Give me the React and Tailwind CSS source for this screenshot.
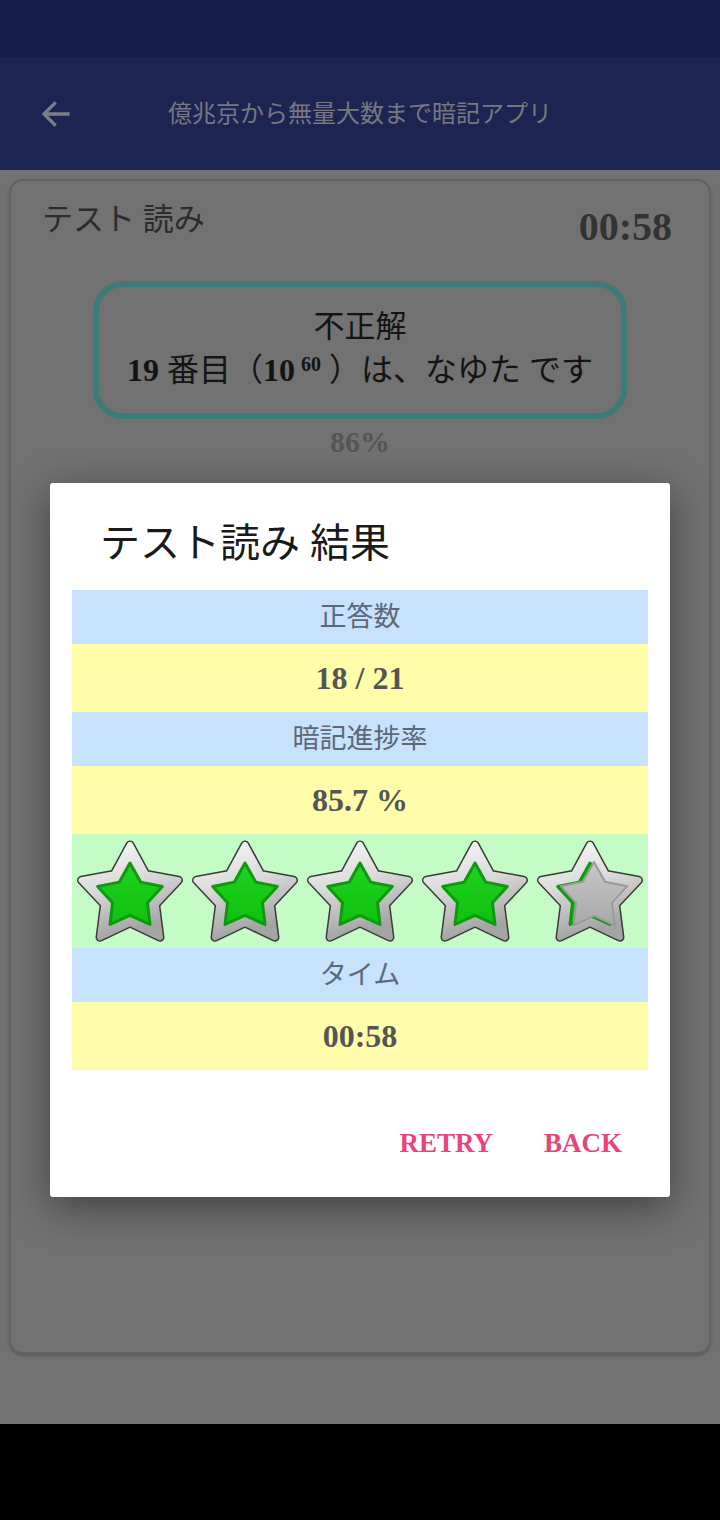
import { useId } from 'react'

const SERIF = { fontFamily: "'Liberation Serif', 'Noto Sans CJK JP', serif" }

const ROWS = [
  { label: '正答数', value: '18 / 21' },
  { label: '暗記進捗率', value: '85.7 %' },
]

function starPoints(cx, cy, r, ratio) {
  const pts = []
  for (let i = 0; i < 10; i++) {
    const rad = i % 2 === 0 ? r : r * ratio
    const a = (Math.PI / 5) * i - Math.PI / 2
    pts.push(`${(cx + rad * Math.cos(a)).toFixed(2)},${(cy + rad * Math.sin(a)).toFixed(2)}`)
  }
  return pts.join(' ')
}

function Star({ partial }) {
  const id = useId().replace(/:/g, '')
  const outer = starPoints(55, 57, 51, 0.53)
  const inner = starPoints(55, 58, 34, 0.54)
  const grey = starPoints(59, 58, 35, 0.54)
  return (
    <svg width="110" height="104" viewBox="0 0 110 104">
      <defs>
        <linearGradient id={`s${id}`} x1="0" y1="0" x2="0.3" y2="1">
          <stop offset="0" stopColor="#fafafa" />
          <stop offset="0.5" stopColor="#d9d9d9" />
          <stop offset="1" stopColor="#a4a4a4" />
        </linearGradient>
        <linearGradient id={`g${id}`} x1="0" y1="0" x2="0" y2="1">
          <stop offset="0" stopColor="#1ed31e" />
          <stop offset="1" stopColor="#10c010" />
        </linearGradient>
        <linearGradient id={`q${id}`} x1="0" y1="0" x2="0" y2="1">
          <stop offset="0" stopColor="#c8c8c8" />
          <stop offset="1" stopColor="#a8a8a8" />
        </linearGradient>
      </defs>
      <polygon points={outer} fill="#3a3a3a" stroke="#3a3a3a" strokeWidth="9" strokeLinejoin="round" />
      <polygon points={outer} fill={`url(#s${id})`} stroke={`url(#s${id})`} strokeWidth="6" strokeLinejoin="round" />
      <polygon points={inner} fill={`url(#g${id})`} stroke="#0e9a0e" strokeWidth="3" strokeLinejoin="round" />
      {partial && (
        <polygon points={grey} fill={`url(#q${id})`} stroke="#9a9a9a" strokeWidth="2" strokeLinejoin="round" />
      )}
    </svg>
  )
}

function LabelRow({ text }) {
  return (
    <div className="h-[54px] bg-[#c7e2fc] flex items-center justify-center text-[27px] text-[#5b6878]">
      {text}
    </div>
  )
}

function ValueRow({ text }) {
  return (
    <div className="h-[68px] bg-[#fffcaa] flex items-center justify-center text-[32px] font-bold text-[#555555]">
      {text}
    </div>
  )
}

export default function App() {
  return (
    <div className="relative w-[720px] h-[1520px] flex flex-col overflow-hidden" style={SERIF}>
      {/* status bar */}
      <div className="h-[57px] bg-[#161d4b]" />

      {/* app bar */}
      <div className="h-[113px] bg-[#1c2452] flex items-center px-[38px]">
        <svg width="36" height="36" viewBox="0 0 24 24" fill="none" stroke="#7c7d86" strokeWidth="2.2" strokeLinecap="square">
          <path d="M20 12H5M11 5l-7 7 7 7" />
        </svg>
        <div className="flex-1 text-center text-[24px] text-[#77787f] pr-[36px]">億兆京から無量大数まで暗記アプリ</div>
      </div>

      {/* page */}
      <div className="flex-1 bg-[#727272] px-[9px] pt-[9px] pb-[70px]">
        <div className="h-full rounded-[14px] border-2 border-[#626262] shadow-[0_2px_3px_rgba(0,0,0,0.2)] px-[31px] pt-[16px]">
          <div className="flex justify-between items-start">
            <div className="text-[31px] text-[#2c2c2c]">テスト 読み</div>
            <div className="text-[40px] font-bold text-[#333333] leading-none mt-[10px] mr-[6px]">00:58</div>
          </div>
          <div className="mx-[51px] mt-[34px] h-[138px] rounded-[30px] border-[6px] border-[#3e7a78] flex flex-col items-center justify-center text-[#141414]">
            <div className="text-[31px] leading-[40px]">不正解</div>
            <div className="text-[32px] leading-[46px]">
              <span className="font-bold">19</span> 番目（<span className="font-bold">10</span>
              <sup className="text-[20px] font-bold ml-[6px]">60</sup> ）は、なゆた です
            </div>
          </div>
          <div className="text-center text-[30px] font-bold text-[#555555] mt-[0px]">86%</div>
        </div>
      </div>

      {/* nav bar */}
      <div className="h-[96px] bg-black" />

      {/* dialog */}
      <div className="absolute left-[50px] top-[483px] w-[620px] h-[714px] bg-white rounded-[3px] shadow-[0_10px_40px_rgba(0,0,0,0.45)] flex flex-col">
        <div className="pl-[50px] pt-[36px] h-[107px] text-[40px] text-[#1a1a1a] leading-[50px]">テスト読み 結果</div>
        <div className="mx-[22px]">
          <LabelRow text={ROWS[0].label} />
          <ValueRow text={ROWS[0].value} />
          <LabelRow text={ROWS[1].label} />
          <ValueRow text={ROWS[1].value} />
          <div className="h-[114px] bg-[#c5fcc5] flex items-center justify-between px-[3px]">
            {[0, 1, 2, 3, 4].map((i) => (
              <Star key={i} partial={i === 4} />
            ))}
          </div>
          <LabelRow text="タイム" />
          <ValueRow text="00:58" />
        </div>
        <div className="flex-1 flex items-center justify-end gap-[51px] pr-[48px] pt-[20px] text-[27px] font-bold text-[#e9437c]">
          <span>RETRY</span>
          <span>BACK</span>
        </div>
      </div>
    </div>
  )
}
